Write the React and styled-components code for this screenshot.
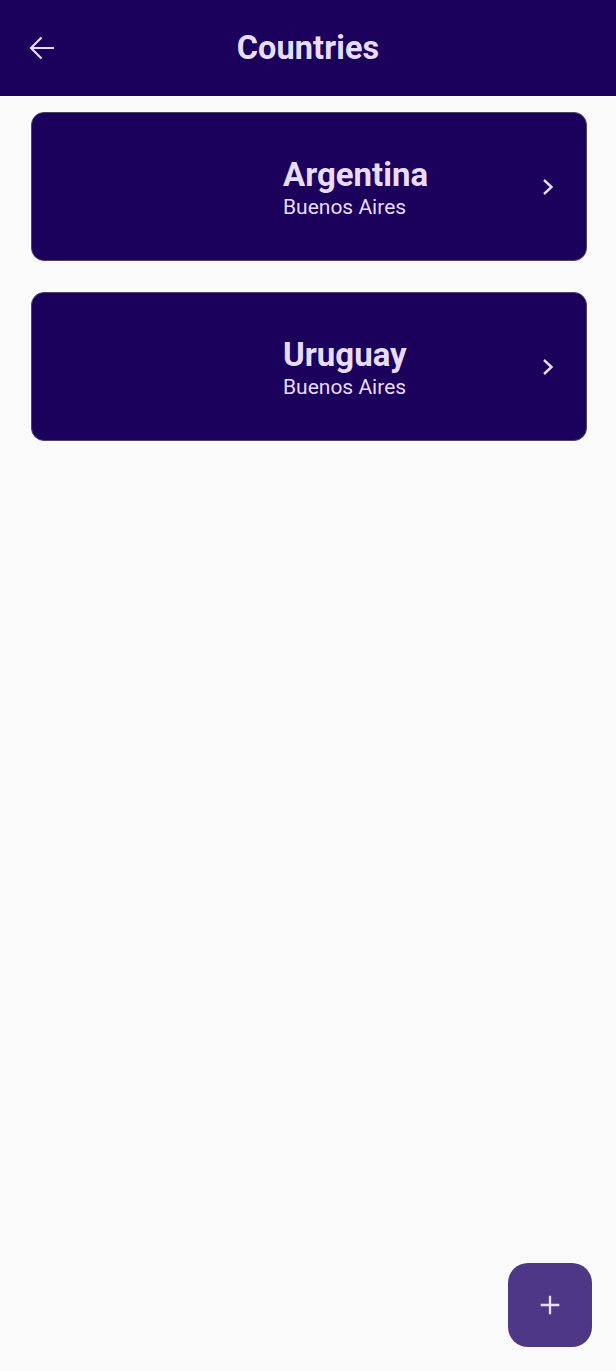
import React from 'react';
import styled, { createGlobalStyle } from 'styled-components';

const GlobalStyle = createGlobalStyle`
    html, body {
        margin: 0;
        padding: 0;
        background: #fafafa;
        font-family: Roboto, "Noto Sans", sans-serif;
    }
`

const countries = [
    { name: 'Argentina', capital: 'Buenos Aires' },
    { name: 'Uruguay', capital: 'Buenos Aires' },
];

class CountryCard extends React.Component {

    render() {

        return (
            <Card>
                <Thumb />
                <CardText>
                    <CountryName>{this.props.name}</CountryName>
                    <Capital>{this.props.capital}</Capital>
                </CardText>
                <Chevron viewBox="0 0 12 18">
                    <path d="M2 2l7.5 7-7.5 7" fill="none" stroke="#e8ddff" strokeWidth="2.4" />
                </Chevron>
            </Card>
        );
    }
}

const App = () => (
    <>
        <GlobalStyle />
        <Page>
            <TopBar>
                <BackButton>
                    <svg width="26" height="24" viewBox="0 0 26 24">
                        <path d="M2 12H25M12.5 1.5L2 12l10.5 10.5" fill="none" stroke="#e8ddff" strokeWidth="2.2" />
                    </svg>
                </BackButton>
                <Title>Countries</Title>
            </TopBar>
            <List>
                {countries.map((c) => (
                    <CountryCard key={c.name} name={c.name} capital={c.capital} />
                ))}
            </List>
            <Fab>
                <svg width="28" height="28" viewBox="0 0 24 24">
                    <path d="M12 4v16M4 12h16" stroke="#e8ddff" strokeWidth="2" />
                </svg>
            </Fab>
        </Page>
    </>
);

const Page = styled.div`
    position: relative;
    min-height: 1371px;
    background: #fafafa;
`

const TopBar = styled.header`
    height: 96px;
    background: #1b005c;
    display: flex;
    align-items: center;
    justify-content: center;
    position: relative;
`

const BackButton = styled.div`
    position: absolute;
    left: 29px;
    top: 36px;
    display: flex;
`

const Title = styled.h1`
    margin: 0;
    color: #e8ddff;
    font-size: 32.5px;
    font-weight: 700;
    letter-spacing: 0.1px;
`

const List = styled.div`
    display: flex;
    flex-direction: column;
    gap: 31px;
    padding: 16px 29px 0 31px;
`

const Card = styled.div`
    box-sizing: border-box;
    height: 149px;
    background: #1b005c;
    border: 1px solid #4b4560;
    border-radius: 13px;
    display: flex;
    align-items: center;
`

const Thumb = styled.div`
    width: 251px;
    flex-shrink: 0;
`

const CardText = styled.div`
    flex: 1;
    display: flex;
    flex-direction: column;
    color: #e8ddff;
`

const CountryName = styled.div`
    font-size: 33px;
    font-weight: 700;
    line-height: 36px;
`

const Capital = styled.div`
    font-size: 21px;
    line-height: 24px;
    margin-top: 2px;
    margin-bottom: -2px;
`

const Chevron = styled.svg`
    width: 12px;
    height: 18px;
    margin-right: 32px;
`

const Fab = styled.div`
    position: absolute;
    right: 24px;
    top: 1263px;
    width: 84px;
    height: 84px;
    border-radius: 20px;
    background: #4f3787;
    display: flex;
    align-items: center;
    justify-content: center;
`

export default App;
